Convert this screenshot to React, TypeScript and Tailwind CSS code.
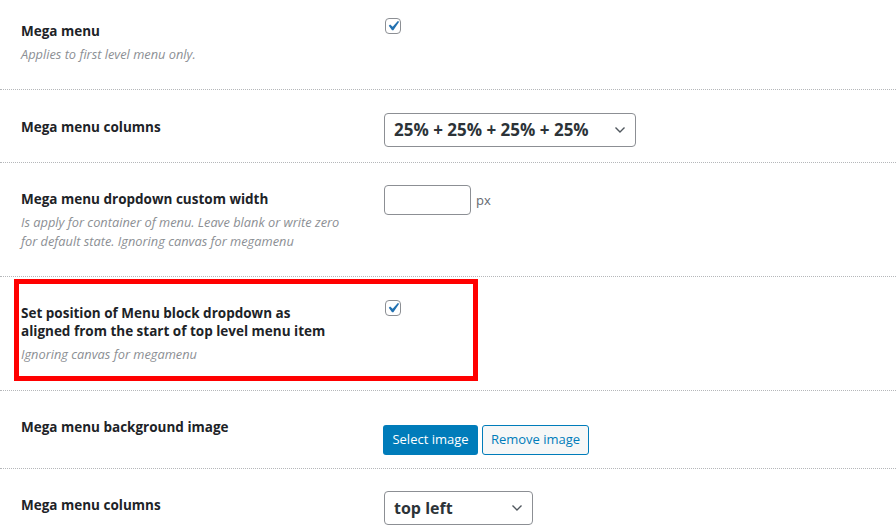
import React from "react";

const font = { fontFamily: '"Open Sans", "Noto Sans", sans-serif' };

function Checkbox() {
  return (
    <div className="w-4 h-4 rounded-[4px] border border-[#8c8f94] bg-white flex items-center justify-center overflow-visible">
      <svg width="20" height="20" viewBox="0 0 20 20" className="shrink-0 -m-[3px]">
        <path d="M14.83 4.89l1.34.94-5.81 8.38H9.02L5.78 9.67l1.34-1.25 2.57 2.4z" fill="#2271b1" />
      </svg>
    </div>
  );
}

function Chevron() {
  return (
    <svg width="12" height="8" viewBox="0 0 12 8">
      <path d="M1.5 1.5 L6 6 L10.5 1.5" stroke="#50575e" strokeWidth="1.4" fill="none" />
    </svg>
  );
}

function Select({ text, w, size }: { text: string; w: string; size: string }) {
  return (
    <div className={`${w} h-[34px] border border-[#8c8f94] rounded-[4px] bg-white flex items-center justify-between pl-[9px] pr-[9px]`}>
      <span className={`${size} font-bold text-[#2c3338]`}>{text}</span>
      <Chevron />
    </div>
  );
}

export default function App() {
  return (
    <div style={font} className="w-[896px] h-[532px] bg-white overflow-hidden text-[#1d2327]">
      {/* Row 1 */}
      <div className="h-[90px] border-b border-dotted border-[#b5b7ba] flex">
        <div className="w-[384px] pl-[21px] pt-[21px]">
          <div className="text-[13.5px] font-bold leading-5">Mega menu</div>
          <div className="text-[12.8px] italic text-[#8c8f94] leading-5 mt-[3px]">Applies to first level menu only.</div>
        </div>
        <div className="pt-[18px] pl-[1px]">
          <Checkbox />
        </div>
      </div>
      {/* Row 2 */}
      <div className="h-[73px] border-b border-dotted border-[#b5b7ba] flex">
        <div className="w-[384px] pl-[21px] pt-[27px]">
          <div className="text-[13.5px] font-bold leading-5">Mega menu columns</div>
        </div>
        <div className="pt-[23px]">
          <Select text="25% + 25% + 25% + 25%" w="w-[252px]" size="text-[17px]" />
        </div>
      </div>
      {/* Row 3 */}
      <div className="h-[114px] border-b border-dotted border-[#b5b7ba] flex">
        <div className="w-[384px] pl-[21px] pt-[26px]">
          <div className="text-[13.5px] font-bold leading-5">Mega menu dropdown custom width</div>
          <div className="text-[12.8px] italic text-[#8c8f94] leading-[19px] mt-[4px] w-[322px]">
            Is apply for container of menu. Leave blank or write zero for default state. Ignoring canvas for megamenu
          </div>
        </div>
        <div className="pt-[22px] flex items-start">
          <div className="w-[87px] h-[30px] border border-[#8c8f94] rounded-[4px] bg-white" />
          <span className="ml-[5px] mt-[6px] text-[13px] text-[#646970]">px</span>
        </div>
      </div>
      {/* Row 4 */}
      <div className="h-[114px] border-b border-dotted border-[#b5b7ba] relative flex">
        <div className="w-[384px] pl-[21px] pt-[27px]">
          <div className="text-[13.5px] font-bold leading-[18px] w-[310px]">
            Set position of Menu block dropdown as aligned from the start of top level menu item
          </div>
          <div className="text-[12.8px] italic text-[#8c8f94] leading-5 mt-[4px]">Ignoring canvas for megamenu</div>
        </div>
        <div className="pt-[23px] pl-[1px]">
          <Checkbox />
        </div>
        <div className="absolute left-[14px] top-[2px] w-[464px] h-[102px] border-[5px] border-[#ff0000]" />
      </div>
      {/* Row 5 */}
      <div className="h-[78px] border-b border-dotted border-[#b5b7ba] flex">
        <div className="w-[383px] pl-[21px] pt-[26px]">
          <div className="text-[13.5px] font-bold leading-5">Mega menu background image</div>
        </div>
        <div className="pt-[34px] flex gap-[4px] items-start">
          <div className="h-[30px] w-[95px] rounded-[3px] bg-[#007cba] text-white text-[13px] flex items-center justify-center">
            Select image
          </div>
          <div className="h-[30px] w-[107px] rounded-[3px] border border-[#007cba] bg-[#f6f7f7] text-[#007cba] text-[13px] flex items-center justify-center">
            Remove image
          </div>
        </div>
      </div>
      {/* Row 6 */}
      <div className="h-[64px] flex">
        <div className="w-[384px] pl-[21px] pt-[26px]">
          <div className="text-[13.5px] font-bold leading-5">Mega menu columns</div>
        </div>
        <div className="pt-[22px]">
          <Select text="top left" w="w-[149px]" size="text-[16px]" />
        </div>
      </div>
    </div>
  );
}
